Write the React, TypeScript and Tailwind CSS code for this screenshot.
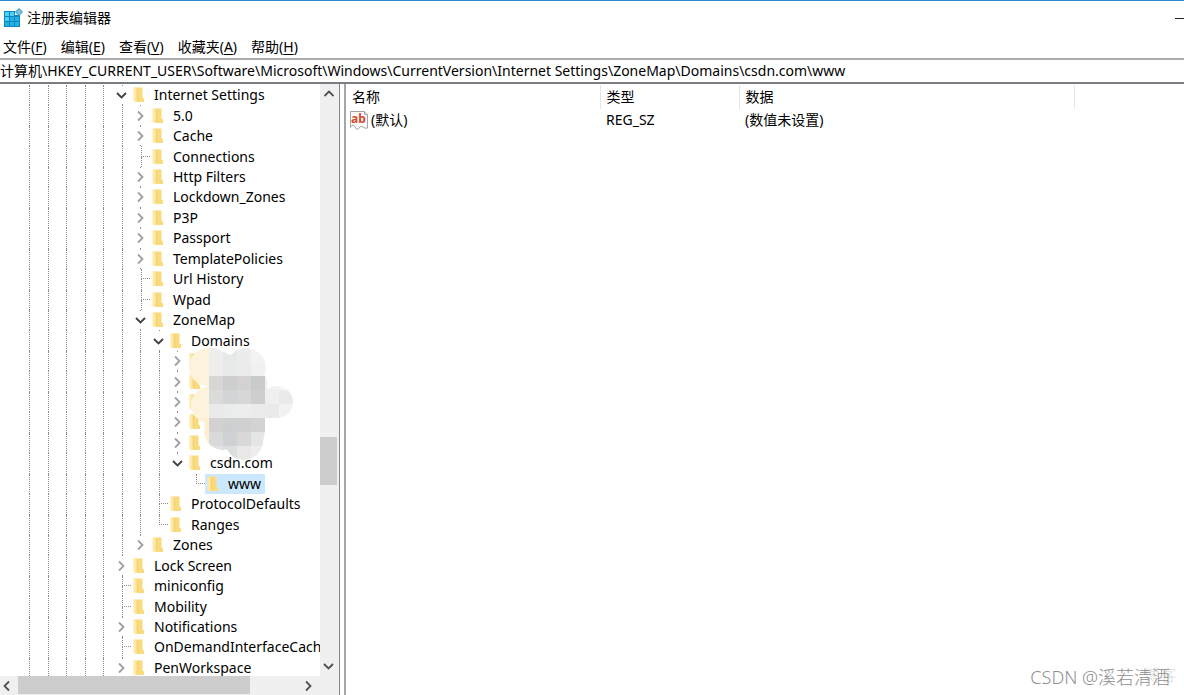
import { useState } from 'react';

type Node = {
  label: string;
  depth: number;
  state: 'open' | 'closed' | 'leaf';
  last?: boolean;
  skip?: number;
};

const nodes: Node[] = [
  { label: 'Internet Settings', depth: 5, state: 'open' },
  { label: '5.0', depth: 6, state: 'closed' },
  { label: 'Cache', depth: 6, state: 'closed' },
  { label: 'Connections', depth: 6, state: 'leaf' },
  { label: 'Http Filters', depth: 6, state: 'closed' },
  { label: 'Lockdown_Zones', depth: 6, state: 'closed' },
  { label: 'P3P', depth: 6, state: 'closed' },
  { label: 'Passport', depth: 6, state: 'closed' },
  { label: 'TemplatePolicies', depth: 6, state: 'closed' },
  { label: 'Url History', depth: 6, state: 'leaf' },
  { label: 'Wpad', depth: 6, state: 'leaf' },
  { label: 'ZoneMap', depth: 6, state: 'open' },
  { label: 'Domains', depth: 7, state: 'open' },
  { label: '', depth: 8, state: 'closed' },
  { label: '', depth: 8, state: 'closed' },
  { label: '', depth: 8, state: 'closed' },
  { label: '', depth: 8, state: 'closed' },
  { label: '', depth: 8, state: 'closed' },
  { label: 'csdn.com', depth: 8, state: 'open', last: true },
  { label: 'www', depth: 9, state: 'leaf', last: true, skip: 8 },
  { label: 'ProtocolDefaults', depth: 7, state: 'leaf' },
  { label: 'Ranges', depth: 7, state: 'leaf', last: true },
  { label: 'Zones', depth: 6, state: 'closed', last: true },
  { label: 'Lock Screen', depth: 5, state: 'closed' },
  { label: 'miniconfig', depth: 5, state: 'leaf' },
  { label: 'Mobility', depth: 5, state: 'leaf' },
  { label: 'Notifications', depth: 5, state: 'closed' },
  { label: 'OnDemandInterfaceCache', depth: 5, state: 'leaf' },
  { label: 'PenWorkspace', depth: 5, state: 'closed' },
];

const menus = [
  { label: '文件', hotkey: 'F' },
  { label: '编辑', hotkey: 'E' },
  { label: '查看', hotkey: 'V' },
  { label: '收藏夹', hotkey: 'A' },
  { label: '帮助', hotkey: 'H' },
];

// colours of the censor mosaic, one row of 14px cells after another
const mosaic = [
  ['#fdf3dc', '#fdf3dc', '#eeeeed', '#e8eaea', '#eeefef', '#f4f5f5', '#f5f5f5', '#f5f5f5'],
  ['#fdf3dc', '#fdf3dc', '#eeeeed', '#e6e9e9', '#ebecec', '#f3f3f3', '#f5f5f5', '#f5f5f5'],
  ['#fdf3dc', '#fdf3dc', '#efeeed', '#e8eaea', '#ebebeb', '#f1f1f1', '#f5f5f5', '#f5f5f5'],
  ['#fdf3dc', '#fdf3dc', '#d8d6d5', '#cdcfcf', '#d3d2d1', '#c9caca', '#f1f1f1', '#f5f5f5'],
  ['#fdf3dc', '#fdf3dc', '#dcdbdb', '#d2d4d5', '#d8d7d7', '#cfcecd', '#efefef', '#eaeaea'],
  ['#fdf3dc', '#fdf3dc', '#ebeaea', '#ebeded', '#ededed', '#ebebeb', '#eaeaea', '#f2f2f2'],
  ['#fdf0d2', '#fdf0d2', '#d3d2d1', '#cdd0d0', '#cfd0d0', '#d3d3d3', '#f5f5f5', '#f5f5f5'],
  ['#fdf0d2', '#fdf0d2', '#d9d9d9', '#cfd2d4', '#d9d8d7', '#e4e5e5', '#f5f5f5', '#f5f5f5'],
  ['#fdf0d2', '#fdf0d2', '#e3e3e3', '#dcdfe0', '#e9e8e7', '#eeeeee', '#f5f5f5', '#f5f5f5'],
  ['#fdf0d2', '#fdf0d2', '#e8e8e8', '#efefef', '#f2f2f2', '#f3f3f3', '#f5f5f5', '#f5f5f5'],
];

function Folder() {
  return (
    <svg viewBox="0 0 12 16" className="h-4 w-3 shrink-0">
      <path d="M1 .5h8.500v10l1.500 1v3.500H2z" fill="#f9da7c" />
      <path d="M.5.5L4 2v12.500l-1.500 1-2-1.500z" fill="#ffe9a6" />
      <path d="M4.200 2v12" stroke="#eecb66" strokeWidth=".8" />
    </svg>
  );
}

function Chevron({ dir, className }: { dir: 'up' | 'down' | 'left' | 'right'; className: string }) {
  const paths = {
    up: 'M1.500 8L6 3.500 10.500 8',
    down: 'M1 4L5.500 8.500 10 4',
    left: 'M8 1.500L3.500 6 8 10.500',
    right: 'M3 1.500L7.500 6 3 10.500',
  };
  return (
    <svg viewBox="0 0 12 12" className={className} fill="none" stroke="currentColor" strokeWidth="1.8">
      <path d={paths[dir]} />
    </svg>
  );
}

function RegeditIcon() {
  return (
    <svg viewBox="0 0 20 20" className="size-5 shrink-0">
      <path d="M1 3h11v4h5v12H1z" fill="#0e87bb" />
      <g fill="#4fd0f8">
        <path d="M2 4h4v4H2zM7 4h4v4H7zM2 9h4v4H2z" />
      </g>
      <g fill="#22b0e4">
        <path d="M7 9h4v4H7zM12 9h4v4h-4zM2 14h4v4H2zM7 14h4v4H7zM12 14h4v4h-4z" />
      </g>
      <path d="M16 .500L19.500 4 16 7.500 12.500 4z" fill="#6fc5e2" stroke="#2787ab" strokeWidth=".9" />
    </svg>
  );
}

function StringIcon() {
  return (
    <svg viewBox="0 0 20 20" className="size-5 shrink-0">
      <path d="M1.500 1.500h14l3 3v13.500q-2.500 1-4.500-1t-4 1-4-1-4.500.5z" fill="#fbfbfb" stroke="#a5a5a5" />
      <path d="M15.500 1.500v3h3" fill="#e5e5e5" stroke="#a5a5a5" />
      <text x="9.500" y="12.500" textAnchor="middle" fontSize="12" fontWeight="700" fill="#d9482b" fontFamily="Open Sans, sans-serif">
        ab
      </text>
    </svg>
  );
}

function Mosaic() {
  return (
    <svg viewBox="0 0 120 124" className="pointer-events-none absolute top-[-11px] left-[180px] z-10 h-[124px] w-[120px]">
      <clipPath id="cloud">
        <circle cx="28" cy="27" r="19" />
        <path d="M28 8h8l14 7 8-4v30H28zM28 36h57q4 5 2 12l-2 30v14l-3 14H40L24 92z" />
        <circle cx="66" cy="28" r="20" />
        <circle cx="29" cy="65" r="18" />
        <circle cx="97" cy="62" r="16" />
        <circle cx="43" cy="91" r="19" />
        <circle cx="64" cy="101" r="19" />
        <path d="M80 50h20v28H80z" />
      </clipPath>
      <g clipPath="url(#cloud)">
        {mosaic.map((row, y) =>
          row.map((fill, x) => (
            <rect key={`${x}-${y}`} x={1 + x * 14} y={y * 14 - 6} width={x === 7 ? 20 : 14} height="14" fill={fill} />
          ))
        )}
      </g>
    </svg>
  );
}

function Joint({ node }: { node: Node }) {
  const line = 'border-l border-dotted border-[#8c8c8c]';
  if (node.state !== 'leaf') {
    return (
      <span className="flex shrink-0 flex-col items-center justify-between odd:w-[19px] even:w-[18px]">
        <span className={`h-px ${line}`} />
        <Chevron
          dir={node.state === 'open' ? 'down' : 'right'}
          className={node.state === 'open' ? 'size-3 text-[#404040]' : 'size-3 text-[#a0a0a0]'}
        />
        <span className={node.last ? 'h-px' : `h-px ${line}`} />
      </span>
    );
  }
  return (
    <span className="grid shrink-0 grid-cols-2 grid-rows-2 odd:w-[19px] even:w-[18px]">
      <span />
      <span className="border-b border-l border-dotted border-[#8c8c8c]" />
      <span />
      <span className={node.last ? '' : line} />
    </span>
  );
}

export default function App() {
  const [selected, setSelected] = useState(19);
  const [path, setPath] = useState(
    '计算机\\HKEY_CURRENT_USER\\Software\\Microsoft\\Windows\\CurrentVersion\\Internet Settings\\ZoneMap\\Domains\\csdn.com\\www'
  );

  return (
    <div className="relative flex h-screen flex-col overflow-hidden border-t border-[#2a86d4] bg-white font-['Noto_Sans','Noto_Sans_CJK_SC',sans-serif] text-sm text-black">
      {/* Title bar */}
      <header className="flex h-[34px] shrink-0 items-center pl-[3px]">
        <RegeditIcon />
        <h1 className="ml-1">注册表编辑器</h1>
        <button aria-label="最小化" className="ml-auto w-2.5 py-2">
          <span className="ml-px block h-px bg-[#222]" />
        </button>
      </header>

      {/* Menu bar */}
      <nav className="flex h-[23px] shrink-0 items-center gap-3.5 pl-[3px]">
        {menus.map((m) => (
          <button key={m.hotkey}>
            {m.label}(<u className="underline-offset-2">{m.hotkey}</u>)
          </button>
        ))}
      </nav>

      {/* Address bar */}
      <div className="flex h-[26px] shrink-0 border-t-2 border-b-2 border-t-[#adadad] border-b-[#7b7d85]">
        <input
          aria-label="地址"
          value={path}
          onChange={(e) => setPath(e.target.value)}
          className="w-full outline-none"
        />
      </div>

      <div className="flex min-h-0 flex-1">
        {/* Key tree */}
        <div className="flex w-[340px] shrink-0 flex-col border-r border-[#85878f] bg-[#f0f0f0]">
          <div className="flex min-h-0 flex-1 pr-0.5">
            <div className="min-w-0 flex-1 overflow-hidden bg-white">
              <div role="tree" className="flex h-[calc(100%+2px)] flex-col pt-px">
                {nodes.map((node, i) => (
                  <div key={i} role="treeitem" aria-selected={i === selected} className="relative flex min-h-0 flex-1 pl-5">
                    {[...Array(node.depth)].map((_, g) => (
                      <span key={g} className="flex shrink-0 justify-center odd:w-[19px] even:w-[18px]">
                        {g !== node.skip && <span className="border-l border-dotted border-[#8c8c8c]" />}
                      </span>
                    ))}
                    <Joint node={node} />
                    <button
                      aria-label={node.label || '已隐藏'}
                      onClick={() => setSelected(i)}
                      className={`flex items-center gap-[9px] pr-1 pl-0.5 whitespace-nowrap ${i === selected ? 'bg-[#cce8ff]' : ''}`}
                    >
                      <Folder />
                      {node.label}
                    </button>
                    {i === 13 && <Mosaic />}
                  </div>
                ))}
              </div>
            </div>
            <div className="flex w-[17px] shrink-0 flex-col items-center text-[#505050]">
              <button aria-label="向上滚动" className="flex h-5 items-center">
                <Chevron dir="up" className="size-3" />
              </button>
              <div className="flex w-full flex-1 flex-col">
                <div className="grow-[333]" />
                <div className="grow-[48] bg-[#cdcdcd]" />
                <div className="grow-[171]" />
              </div>
              <button aria-label="向下滚动" className="flex h-5 items-center">
                <Chevron dir="down" className="size-3" />
              </button>
            </div>
          </div>
          <div className="flex h-[19px] shrink-0 items-stretch pr-[22px] text-[#505050]">
            <button aria-label="向左滚动" className="flex w-[18px] items-center pl-px">
              <Chevron dir="left" className="size-3" />
            </button>
            <div className="flex flex-1">
              <div className="mb-px grow-[232] bg-[#cdcdcd]" />
              <div className="grow-[51]" />
            </div>
            <button aria-label="向右滚动" className="flex w-4 items-center justify-center">
              <Chevron dir="right" className="size-3" />
            </button>
          </div>
        </div>

        {/* Values */}
        <main className="ml-1 min-w-0 flex-1 border-l-2 border-[#a5a7ad] pt-px">
          <table className="w-full table-fixed text-left">
            <colgroup>
              <col className="w-[254px]" />
              <col className="w-[139px]" />
              <col className="w-[335px]" />
              <col />
            </colgroup>
            <thead>
              <tr className="h-6">
                <th className="border-r border-[#e5e5e5] pl-1.5 font-normal">名称</th>
                <th className="border-r border-[#e5e5e5] pl-1.5 font-normal">类型</th>
                <th className="border-r border-[#e5e5e5] pl-1.5 font-normal">数据</th>
                <th />
              </tr>
            </thead>
            <tbody>
              <tr className="h-[22px]">
                <td className="pl-[3px]">
                  <span className="flex items-center gap-0.5">
                    <StringIcon />
                    (默认)
                  </span>
                </td>
                <td className="pl-1.5">REG_SZ</td>
                <td className="pl-1.5">(数值未设置)</td>
                <td />
              </tr>
            </tbody>
          </table>
        </main>
      </div>

      {/* Watermark */}
      <div className="absolute right-3.5 bottom-1 text-lg font-light whitespace-nowrap">
        <span className="absolute top-0 right-[-6px] text-base text-[#dcdcdc]">博客</span>
        <span className="relative text-[#8f8f8f]">CSDN @溪若清酒</span>
      </div>
    </div>
  );
}
